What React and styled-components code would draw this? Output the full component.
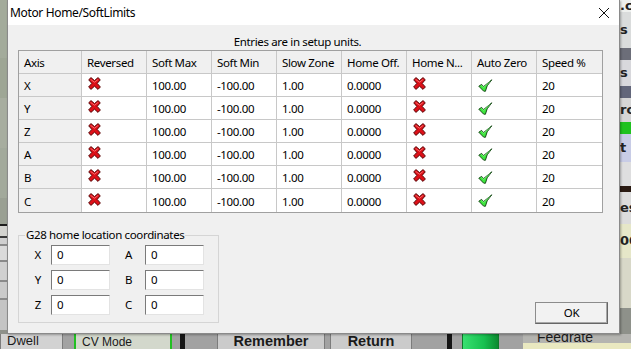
import React from 'react';
import styled, { createGlobalStyle } from 'styled-components';

const GlobalStyle = createGlobalStyle`
  *, *::before, *::after {
    box-sizing: border-box;
  }
  html, body {
    margin: 0;
    padding: 0;
    overflow: hidden;
  }
  body {
    font-family: "Noto Sans", "Segoe UI", sans-serif;
    font-size: 11.5px;
    letter-spacing: -0.35px;
    color: #000;
  }
`;

const Desktop = styled.div`
  position: relative;
  width: 631px;
  height: 349px;
  overflow: hidden;
  display: grid;
  grid-template-columns: 7px 1fr 11px;
  grid-template-rows: 334px 15px;
  background: #8e918a;
`;

const SideStrip = styled.div`
  display: flex;
  flex-direction: column;
  overflow: hidden;
`;

const Band = styled.div`
  flex: none;
  height: ${({ h }) => h}px;
  background: ${({ bg }) => bg};
  color: #222;
  font-family: "DejaVu Sans", sans-serif;
  font-weight: bold;
  font-size: 13px;
  letter-spacing: 0;
  line-height: ${({ h }) => h}px;
  overflow: hidden;
  white-space: nowrap;
  border-bottom: ${({ line }) => (line ? `2px solid ${line}` : 'none')};
`;

const BottomBar = styled.div`
  grid-column: 1 / 4;
  display: flex;
  align-items: flex-start;
  background: #a2a2a2;
  overflow: hidden;
`;

const BgButton = styled.div`
  flex: none;
  width: ${({ w }) => w}px;
  margin-left: ${({ ml }) => ml || 0}px;
  height: 22px;
  margin-top: -4px;
  background: ${({ bg }) => bg || '#cbcbcb'};
  border: ${({ bw }) => bw ?? 1}px solid ${({ bd }) => bd || '#7c7c7c'};
  font-family: "Liberation Sans", sans-serif;
  font-weight: ${({ bold }) => (bold ? 'bold' : 'normal')};
  font-size: ${({ fs }) => fs || 12}px;
  letter-spacing: 0;
  line-height: 20px;
  text-align: ${({ left }) => (left ? 'left' : 'center')};
  padding-left: ${({ pl }) => pl || 0}px;
  color: #1a1a1a;
  overflow: hidden;
  white-space: nowrap;
`;

const GreenGlow = styled(BgButton)`
  background: linear-gradient(90deg, #38e070, #18c050 60%, #0c8a30);
`;

const FeedPanel = styled.div`
  flex: none;
  margin-left: 24px;
  width: 120px;
  display: flex;
  flex-direction: column;
`;

const FeedLabel = styled.div`
  height: 11px;
  line-height: 11px;
  margin-top: -2px;
  padding-left: 14px;
  font-family: "Liberation Sans", sans-serif;
  font-size: 14px;
  letter-spacing: 0;
  color: #1a1a1a;
  overflow: hidden;
  background: #b4b4b0;
`;

const FeedBox = styled.div`
  height: 8px;
  background: #e9e8c0;
`;

const Window = styled.div`
  position: absolute;
  left: 7px;
  top: 0;
  width: 613px;
  height: 334px;
  background: #f0f0f0;
  border: 1px solid #8a8a8a;
  border-top: none;
  box-shadow: 1px 1px 2px rgba(0, 0, 0, 0.3);
  display: flex;
  flex-direction: column;
`;

const TitleBar = styled.div`
  height: 25px;
  background: #fff;
  display: flex;
  align-items: center;
  justify-content: space-between;
  padding-left: 2px;
  font-size: 12px;
`;

const CloseButton = styled.div`
  width: 30px;
  height: 25px;
  display: flex;
  align-items: center;
  justify-content: center;
`;

const Body = styled.div`
  flex: 1;
  padding: 9px 10px 0 10px;
  display: flex;
  flex-direction: column;
`;

const Caption = styled.div`
  text-align: center;
  height: 16px;
  line-height: 16px;
  padding-right: 32px;
`;

const Table = styled.div`
  display: grid;
  grid-template-columns: 63px repeat(8, 65px);
  width: 585px;
  border: 1px solid #a0a0a0;
  background: #fff;
`;

const Cell = styled.div`
  height: 23px;
  padding-left: ${({ icon }) => (icon ? 6 : 5)}px;
  padding-top: 1px;
  border-right: 1px solid #c8c8c8;
  border-bottom: 1px solid #c8c8c8;
  background: ${({ head }) => (head ? '#f0f0f0' : '#fff')};
  white-space: nowrap;
  overflow: hidden;
  display: flex;
  align-items: center;
  &:nth-child(9n) {
    border-right: none;
  }
  &:nth-last-child(-n + 9) {
    border-bottom: none;
  }
`;

const Lower = styled.div`
  display: flex;
  justify-content: space-between;
  align-items: flex-start;
  padding-top: 15px;
`;

const Group = styled.fieldset`
  margin: 0;
  width: 201px;
  border: 1px solid #d5d5d5;
  border-radius: 0;
  padding: 3px 0 7px 0;
  min-width: 0;
`;

const Legend = styled.legend`
  padding: 0 1px;
  margin-left: 6px;
  height: 14px;
  line-height: 14px;
`;

const FieldGrid = styled.div`
  display: grid;
  grid-template-columns: 32px 59px 35px 59px;
  row-gap: 5px;
`;

const FieldLabel = styled.div`
  height: 20px;
  line-height: 20px;
  text-align: right;
  padding-right: ${({ wide }) => (wide ? 13 : 10)}px;
`;

const Input = styled.div`
  width: 59px;
  height: 20px;
  line-height: 18px;
  padding-left: 5px;
  background: #fff;
  border: 1px solid #e3e3e3;
  border-top-color: #7a7a7a;
  border-left-color: #7a7a7a;
`;

const OkButton = styled.div`
  width: 73px;
  height: 22px;
  margin-top: 74px;
  margin-right: 1px;
  line-height: 20px;
  text-align: center;
  background: #f2f2f2;
  border: 1px solid #8c8c8c;
  border-right-color: #666;
  border-bottom-color: #666;
  box-shadow: inset -1px -1px 0 #a8a8a8;
`;

const RedCross = () => (
  <svg width="13" height="13" viewBox="0 0 13 13" style={{ marginTop: -4 }}>
    <path
      d="M0.7 2.8 L3 0.6 L6.5 3.6 L10 0.6 L12.3 2.8 L9.2 6.4 L12.4 10 L10 12.4 L6.5 9.2 L3 12.4 L0.6 10 L3.8 6.4 Z"
      fill="#dd1018"
      stroke="#4a0000"
      strokeWidth="0.9"
      strokeLinejoin="round"
    />
    <path d="M2.6 2.4 L6.5 5.2 L10.2 2.4" fill="none" stroke="#ff8080" strokeWidth="0.8" />
  </svg>
);

const GreenCheck = () => (
  <svg width="15" height="13" viewBox="0 0 15 13" style={{ marginTop: -1 }}>
    <path
      d="M0.8 7.2 L3.6 5.4 L5.6 7.6 L13.8 0.8 L9.2 6.8 L7.4 12.3 L5.6 12.1 Z"
      fill="#3de63d"
      stroke="#0b3b0b"
      strokeWidth="0.9"
      strokeLinejoin="round"
    />
    <path d="M3.6 6.2 L5.6 8.4 L12.4 2.2" fill="none" stroke="#a8ffa8" strokeWidth="0.6" />
  </svg>
);

const CloseIcon = () => (
  <svg width="12" height="12" viewBox="0 0 12 12">
    <path d="M1 1 L11 11 M11 1 L1 11" stroke="#111" strokeWidth="1" />
  </svg>
);

const headers = ['Axis', 'Reversed', 'Soft Max', 'Soft Min', 'Slow Zone', 'Home Off.', 'Home N...', 'Auto Zero', 'Speed %'];
const axes = ['X', 'Y', 'Z', 'A', 'B', 'C'];
const coords = [['X', 'A'], ['Y', 'B'], ['Z', 'C']];

const leftBands = [
  { h: 58, bg: '#a3ab9b' },
  { h: 40, bg: '#9ea695' },
  { h: 50, bg: '#a7ad9f' },
  { h: 50, bg: '#a2a99b' },
  { h: 28, bg: '#9aa093', line: '#1d1d1d' },
  { h: 12, bg: '#d3d3cf', line: '#3a3a3a' },
  { h: 8, bg: '#cfcfcf', line: '#8a8a8a' },
  { h: 16, bg: '#dadada', line: '#8a8a8a' },
  { h: 20, bg: '#d0d0d0', line: '#8a8a8a' },
  { h: 18, bg: '#cacaca', line: '#8a8a8a' },
  { h: 30, bg: '#c4c4c4' },
];

const rightBands = [
  { h: 12, bg: '#eef0ee', t: '.c' },
  { h: 36, bg: '#dadcdc', t: 's' },
  { h: 12, bg: '#6c6e79' },
  { h: 26, bg: '#d8d8dc', t: 's' },
  { h: 12, bg: '#62667a' },
  { h: 24, bg: '#d6d6d6', t: 'ro' },
  { h: 12, bg: '#1fc21f' },
  { h: 28, bg: '#c8cce6', t: 't' },
  { h: 24, bg: '#dededf' },
  { h: 6, bg: '#2a1a12' },
  { h: 32, bg: '#dcdcdc', t: 'es' },
  { h: 34, bg: '#e6e7c8', t: '00' },
  { h: 50, bg: '#d8d8c8' },
];

const App = () => (
  <>
    <GlobalStyle />
    <Desktop>
      <SideStrip>
        {leftBands.map((b, i) => (
          <Band key={i} h={b.h} bg={b.bg} line={b.line} />
        ))}
      </SideStrip>
      <div />
      <SideStrip>
        {rightBands.map((b, i) => (
          <Band key={i} h={b.h} bg={b.bg}>
            {b.t}
          </Band>
        ))}
      </SideStrip>
      <BottomBar>
        <BgButton w={63} bw={1} fs={13} pl={6} left bg="#d2d2d2">
          Dwell
        </BgButton>
        <BgButton w={98} ml={11} bg="#d3d8cc" bd="#22c022" bw={2} pl={6} left>
          CV Mode
        </BgButton>
        <BgButton w={5} ml={8} bg="#151515" bd="#151515" />
        <BgButton w={108} ml={32} fs={14.5} bold>
          Remember
        </BgButton>
        <BgButton w={82} ml={5} fs={14.5} bold>
          Return
        </BgButton>
        <BgButton w={5} ml={35} bg="#151515" bd="#151515" />
        <GreenGlow w={37} ml={10} bd="#0e7a2a" />
        <FeedPanel>
          <FeedLabel>Feedrate</FeedLabel>
          <FeedBox />
        </FeedPanel>
      </BottomBar>
      <Window>
        <TitleBar>
          <span>Motor Home/SoftLimits</span>
          <CloseButton>
            <CloseIcon />
          </CloseButton>
        </TitleBar>
        <Body>
          <Caption>Entries are in setup units.</Caption>
          <Table>
            {headers.map((h) => (
              <Cell key={h} head>
                {h}
              </Cell>
            ))}
            {axes.map((a) => (
              <React.Fragment key={a}>
                <Cell head>{a}</Cell>
                <Cell icon>
                  <RedCross />
                </Cell>
                <Cell>100.00</Cell>
                <Cell>-100.00</Cell>
                <Cell>1.00</Cell>
                <Cell>0.0000</Cell>
                <Cell icon>
                  <RedCross />
                </Cell>
                <Cell icon>
                  <GreenCheck />
                </Cell>
                <Cell>20</Cell>
              </React.Fragment>
            ))}
          </Table>
          <Lower>
            <Group>
              <Legend>G28 home location coordinates</Legend>
              <FieldGrid>
                {coords.map(([l, r]) => (
                  <React.Fragment key={l}>
                    <FieldLabel>{l}</FieldLabel>
                    <Input>0</Input>
                    <FieldLabel wide>{r}</FieldLabel>
                    <Input>0</Input>
                  </React.Fragment>
                ))}
              </FieldGrid>
            </Group>
            <OkButton>OK</OkButton>
          </Lower>
        </Body>
      </Window>
    </Desktop>
  </>
);

export default App;
